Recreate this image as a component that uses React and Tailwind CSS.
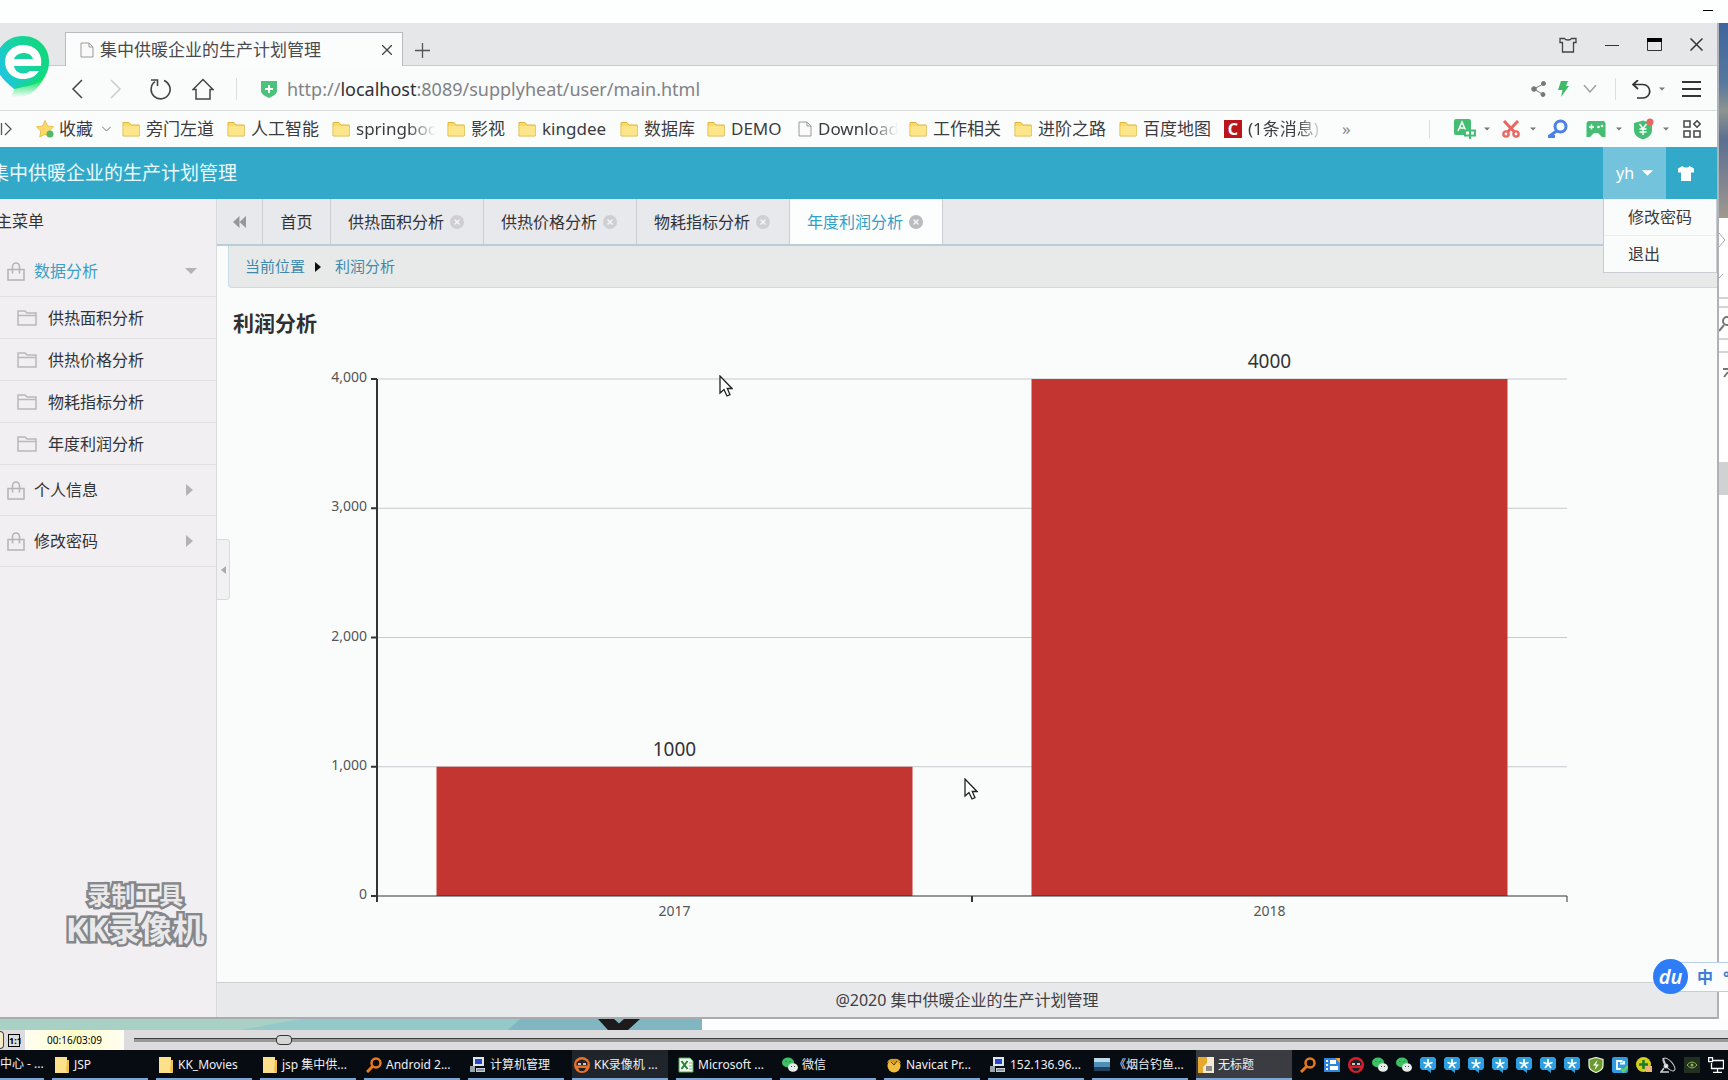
import React, { useState } from "react";

const bookmarks = [
  { label: "旁门左道", width: "w-[70px]" },
  { label: "人工智能", width: "w-[70px]" },
  { label: "springboot", width: "w-20", faded: true },
  { label: "影视", width: "w-9" },
  { label: "kingdee", width: "w-[67px]" },
  { label: "数据库", width: "w-[52px]" },
  { label: "DEMO", width: "w-14" },
  { label: "Download", width: "w-20", icon: "page", faded: true },
  { label: "工作相关", width: "w-[70px]" },
  { label: "进阶之路", width: "w-[70px]" },
  { label: "百度地图", width: "w-[70px]" },
  { label: "(1条消息)", width: "w-[76px]", icon: "c", faded: true },
];

const tabs = ["供热面积分析", "供热价格分析", "物耗指标分析", "年度利润分析"];

const profits = [
  { year: "2017", value: 1000 },
  { year: "2018", value: 4000 },
];

const tasks = [
  { label: "JSP", icon: "folder" },
  { label: "KK_Movies", icon: "folder" },
  { label: "jsp 集中供...", icon: "folder" },
  { label: "Android 2...", icon: "search" },
  { label: "计算机管理", icon: "computer" },
  { label: "KK录像机 ...", icon: "kk", tone: "bg-[#20242b]" },
  { label: "Microsoft ...", icon: "excel" },
  { label: "微信", icon: "wechat" },
  { label: "Navicat Pr...", icon: "navicat" },
  { label: "152.136.96...", icon: "computer" },
  { label: "《烟台钓鱼...", icon: "photo" },
  { label: "无标题", icon: "untitled", tone: "bg-[#3a3c42]" },
];

const tray = [
  "search", "panel", "kk2", "wechat", "wechat", "star", "star", "star", "star",
  "star", "star", "star", "shield", "clip", "plus", "dish", "nvidia", "network",
];

/* ---------- icons ---------- */

const FolderIcon = () => (
  <svg viewBox="0 0 18 16" className="h-4 w-[18px] shrink-0">
    <path d="M1 1.500h6l2 2.500h8.200V15H1z" fill="#fbdc63" stroke="#e0b63a" />
    <path d="M1.500 5h15.500v9.500H1.500z" fill="#fde58a" />
  </svg>
);

const PageIcon = () => (
  <svg viewBox="0 0 14 16" className="h-4 w-3.5 shrink-0" fill="#fafafa" stroke="#9a9a9a">
    <path d="M1 1h8l4 4v10H1zM9 1v4h4" />
  </svg>
);

const Caret = ({ className = "h-1 w-2 text-[#777]" }) => (
  <svg viewBox="0 0 8 4" className={`shrink-0 ${className}`}>
    <path d="M0 0h8L4 4z" fill="currentColor" />
  </svg>
);

const BagIcon = () => (
  <svg viewBox="0 0 18 19" className="h-[19px] w-[18px] shrink-0" fill="none" stroke="#b4b3b6" strokeWidth="1.500">
    <path d="M1 7.500h16v10.500H1zM5.500 11.500V4.500a3.500 3.500 0 0 1 7 0v7" />
  </svg>
);

const MenuFolderIcon = () => (
  <svg viewBox="0 0 20 16" className="h-4 w-5 shrink-0" fill="none" stroke="#b8b8bb" strokeWidth="1.500">
    <path d="M1 1h7l2 2h9V15H1zM1 5.500h18" />
  </svg>
);

const CloseDot = ({ active }) => (
  <svg viewBox="0 0 14 14" className={active ? "h-3.5 w-3.5 text-[#b9bbbf]" : "h-3.5 w-3.5 text-[#cfcfd3]"}>
    <circle cx="7" cy="7" r="7" fill="currentColor" />
    <path d="M4.500 4.500l5 5m0-5l-5 5" stroke="#f4f4f6" strokeWidth="1.500" />
  </svg>
);

const Cursor = () => (
  <svg viewBox="0 0 14 22" className="h-[22px] w-3.5" fill="#fff" stroke="#222" strokeWidth="1.300">
    <path d="M1 1v17l4-3.500L8 21l3-1.300L8.300 13.500H13z" />
  </svg>
);

const BrowserLogo = () => (
  <svg viewBox="0 0 50 64" className="h-16 w-[50px]">
    <defs>
      <linearGradient id="logo" x1="0" y1="0.700" x2="1" y2="0.300">
        <stop offset="0" stopColor="#1fc3ec" />
        <stop offset="0.450" stopColor="#18d3a4" />
        <stop offset="1" stopColor="#0fd879" />
      </linearGradient>
      <linearGradient id="tail" x1="0" y1="0" x2="0" y2="1">
        <stop offset="0.300" stopColor="#0be364" />
        <stop offset="1" stopColor="#0be364" stopOpacity="0" />
      </linearGradient>
    </defs>
    <path d="M23 1C38 1 49 12 49 27c0 11-6 20-17 23l-18 4C4 46-4 38-4 27-4 12 8 1 23 1z" fill="url(#logo)" />
    <path d="M47 37C42 48 36 56 28 60q-8 3-17 2l4-10q20-2 32-15z" fill="url(#tail)" />
    <path d="M14 31h27c2-12-5-21-18-21C12 10 5 18 5 27s7 17 18 17c7 0 12-2 16-8h-9c-6 5-15 2-16-5zM14 24c3-8 17-8 19 0z" fill="#fff" fillRule="evenodd" />
  </svg>
);

const ShirtOutline = () => (
  <svg viewBox="0 0 18 16" className="h-4 w-[18px]" fill="none" stroke="#444" strokeWidth="1.300">
    <path d="M1 1.500h4.500c1 2 6 2 7 0H17v4h-2.500V15h-11V5.500H1z" />
  </svg>
);

const TranslateIcon = () => (
  <svg viewBox="0 0 22 20" className="h-5 w-[22px]">
    <rect width="17" height="16" rx="2" fill="#45be74" />
    <path d="M4 12L8 3l4 9M5.500 9h5" stroke="#fff" strokeWidth="1.500" fill="none" />
    <path d="M11 11.500h10v5H11zM16 9v11" stroke="#45be74" strokeWidth="2" fill="#fff" />
  </svg>
);

const ScissorsIcon = () => (
  <svg viewBox="0 0 18 18" className="h-[18px] w-[18px]" fill="none" stroke="#ea6661" strokeWidth="2.400">
    <path d="M2 1l10.500 11M16 1L5.500 12" strokeWidth="3" />
    <circle cx="4" cy="14" r="2.600" />
    <circle cx="14" cy="14" r="2.600" />
  </svg>
);

const SearchBlueIcon = () => (
  <svg viewBox="0 0 20 20" className="h-5 w-5" fill="none" stroke="#4a80e8" strokeWidth="3">
    <circle cx="12.500" cy="7.500" r="5.500" />
    <path d="M8.500 12L1 17.500h6" />
  </svg>
);

const GamepadIcon = () => (
  <svg viewBox="0 0 20 18" className="h-[18px] w-5">
    <path d="M2 1h16l1.500 2v14H16l-4-4H8l-4 4H.500V3z" fill="#45be74" />
    <path d="M3 7h5M5.500 4.500v5" stroke="#fff" strokeWidth="1.500" />
    <circle cx="12.500" cy="7" r="1.300" fill="#fff" />
    <circle cx="16" cy="6" r="1.300" fill="#fff" />
  </svg>
);

const MoneyShieldIcon = () => (
  <svg viewBox="0 0 22 22" className="h-[22px] w-[22px]">
    <path d="M10 2.500L19 5v7c0 5-4 8-9 9.500C5 20 1 17 1 12V5z" fill="#45be74" />
    <path d="M6.500 6L10 10.500 13.500 6M10 10.500V17M6.500 11h7M6.500 14h7" stroke="#fff" strokeWidth="1.400" fill="none" />
    <circle cx="17" cy="4" r="3.500" fill="#ea6661" />
  </svg>
);

const GridIcon = () => (
  <svg viewBox="0 0 18 18" className="h-[18px] w-[18px]" fill="none" stroke="#444" strokeWidth="1.500">
    <path d="M1 1h6v6H1zM1 11h6v6H1zM11 11h6v6h-6zM14 .800l3.200 3.200L14 7.200 10.800 4z" />
  </svg>
);

function SmallIcon({ name }) {
  const cls = "h-4 w-4 shrink-0";
  switch (name) {
    case "folder":
      return (
        <svg viewBox="0 0 16 16" className={cls}>
          <path d="M1 0h12v14l2 2H1z" fill="#fde08a" />
          <path d="M13 3h2v13l-3-2z" fill="#edc04f" />
        </svg>
      );
    case "search":
      return (
        <svg viewBox="0 0 16 16" className={cls} fill="none" stroke="#e8791c" strokeWidth="2.500">
          <circle cx="10" cy="6" r="4.500" />
          <path d="M6.500 9.500L1 15" strokeWidth="3" />
        </svg>
      );
    case "computer":
      return (
        <svg viewBox="0 0 16 16" className={cls}>
          <path d="M3 0h11v9H3z" fill="#dfe5ee" />
          <path d="M5 2h7v5H5z" fill="#2a46c8" />
          <path d="M0 9h5v6H0z" fill="#9aa3ad" />
          <path d="M6 11h9v4H6z" fill="#c5ccd4" />
          <path d="M7 13h7" stroke="#4d5a66" />
        </svg>
      );
    case "kk":
    case "kk2":
      return (
        <svg viewBox="0 0 16 16" className={cls}>
          <circle cx="8" cy="8" r="8" fill={name === "kk" ? "#e9702a" : "#d81e2c"} />
          <path d="M2.500 5.500q5.500-6 11 0v3h-11z" fill="#222" />
          <path d="M4 7h3M9 7h3" stroke="#fff" strokeWidth="1.500" />
          <path d="M4 11h8l-2 3H6z" fill="#222" />
        </svg>
      );
    case "excel":
      return (
        <svg viewBox="0 0 16 16" className={cls}>
          <path d="M1 1h11l3 3v11H1z" fill="#f1f8ef" stroke="#57a65a" />
          <path d="M3.500 4l6 8m0-8l-6 8" stroke="#2b8038" strokeWidth="2" />
          <path d="M11 6h3M11 9h3M11 12h3" stroke="#7cc07c" />
        </svg>
      );
    case "wechat":
      return (
        <svg viewBox="0 0 16 16" className={cls}>
          <ellipse cx="6" cy="5.500" rx="6" ry="5" fill="#3fc067" />
          <ellipse cx="11" cy="10.500" rx="5" ry="4.300" fill="#e8ecea" />
          <path d="M3.500 4.500h1M7.500 4.500h1M9 9.500h1M12 9.500h1" stroke="#33503c" />
        </svg>
      );
    case "navicat":
      return (
        <svg viewBox="0 0 16 16" className={cls}>
          <circle cx="8" cy="9" r="6.500" fill="#efbd3c" />
          <path d="M1 6Q3 1 8 2q5-1 7 4l-4-1-3 2-3-2z" fill="#d99a22" />
          <path d="M5 5l3 3 3-4" stroke="#543a0c" fill="none" />
        </svg>
      );
    case "photo":
      return (
        <svg viewBox="0 0 16 16" className={cls}>
          <path d="M0 1h16v13H0z" fill="#4d8fb8" />
          <path d="M0 1h16v4H0z" fill="#bcd9e8" />
          <path d="M0 10h16v4H0z" fill="#21415d" />
        </svg>
      );
    case "untitled":
      return (
        <svg viewBox="0 0 16 16" className={cls}>
          <path d="M0 0h16v16H0z" fill="#f3ead4" />
          <path d="M0 0h9v6L5 10v6H0z" fill="#e6a92d" />
          <path d="M8 9h6v5H8z" fill="#8b8b88" />
        </svg>
      );
    case "panel":
      return (
        <svg viewBox="0 0 16 16" className={cls}>
          <path d="M0 1h16v14H0z" fill="#2f86dd" />
          <path d="M6 3h6v4H6zM6 9h8v4H6zM2 3h2v2H2zM2 7h2v2H2zM2 11h2v2H2z" fill="#fff" />
          <path d="M11 1h5v5z" fill="#f2a531" />
        </svg>
      );
    case "star":
      return (
        <svg viewBox="0 0 16 16" className={cls}>
          <path d="M2 0h12l2 2v9l-2 2h-3v3l-4-3H2l-2-2V2z" fill="#2d9fe0" />
          <path d="M8 2v5l4.500-1.500M8 7l3 4M8 7l-3 4M8 7L3.500 5.500" stroke="#fff" strokeWidth="1.800" fill="none" />
        </svg>
      );
    case "shield":
      return (
        <svg viewBox="0 0 16 16" className={cls}>
          <path d="M8 .500l7 2v6c0 4-4 6-7 7-3-1-7-3-7-7v-6z" fill="#6b9b2f" stroke="#e6ecd5" strokeWidth="1.300" />
          <path d="M9.500 3L5 8.500h3L6.500 13 11 7.500H8z" fill="#fff" />
        </svg>
      );
    case "clip":
      return (
        <svg viewBox="0 0 16 16" className={cls}>
          <rect width="16" height="16" rx="2" fill="#2f9be0" />
          <path d="M10.500 4H5v8h4M8 6.500h4V4" stroke="#fff" strokeWidth="1.800" fill="none" />
          <path d="M9 11.500l2.500 3L16 9" stroke="#5ed457" strokeWidth="2.500" fill="none" />
        </svg>
      );
    case "plus":
      return (
        <svg viewBox="0 0 16 16" className={cls}>
          <circle cx="7.500" cy="7.500" r="7.500" fill="#d3cf1c" />
          <path d="M7.500 3v9M3 7.500h9" stroke="#1b7a2c" strokeWidth="2.500" />
          <path d="M10 9h6v6h-6z" fill="#efb277" />
        </svg>
      );
    case "dish":
      return (
        <svg viewBox="0 0 16 16" className={cls} fill="none" stroke="#cfcfcf">
          <ellipse cx="9" cy="7.500" rx="3.500" ry="8" transform="rotate(-42 9 7.500)" />
          <circle cx="6" cy="9" r="2" fill="#fff" />
          <path d="M4 11l-3 4h8M3 1l3 8" strokeWidth="1.500" />
        </svg>
      );
    case "nvidia":
      return (
        <svg viewBox="0 0 16 16" className={cls}>
          <path d="M0 0h16v16H0z" fill="#22301f" />
          <path d="M3 8q5-6 10 0-5 6-10 0z" fill="none" stroke="#8fb552" />
          <circle cx="8" cy="8" r="1.500" fill="#8fb552" />
        </svg>
      );
    default:
      return (
        <svg viewBox="0 0 16 16" className={cls} fill="none" stroke="#fff" strokeWidth="1.300">
          <path d="M5 3.500h10.500v8H3.500V6M9.500 11.500V15M5 15.300h9M.700.700h3.800v4H.700z" />
        </svg>
      );
  }
}

/* ---------- browser chrome ---------- */

function TitleBar() {
  return (
    <div className="flex h-[43px] items-end justify-between bg-[#e6e7e9] shadow-[inset_0_-1px_0_#c9cbcd]">
      <div className="flex items-end pl-[65px]">
        <div className="flex h-[34px] w-[338px] items-center border border-b-0 border-[#b9bbbe] bg-[#fbfcfc] px-3.5 text-[17px] text-[#4a4a4e]">
          <PageIcon />
          <span className="ml-1.5 flex-1 whitespace-nowrap">集中供暖企业的生产计划管理</span>
          <button aria-label="关闭标签页" className="mr-[-4px]">
            <svg viewBox="0 0 10 10" className="h-2.5 w-2.5" stroke="#444" strokeWidth="1.300">
              <path d="M0 0l10 10M10 0L0 10" />
            </svg>
          </button>
        </div>
        <button aria-label="新建标签页" className="mb-2 ml-3">
          <svg viewBox="0 0 15 15" className="h-[15px] w-[15px]" stroke="#555" strokeWidth="1.300">
            <path d="M7.500 0v15M0 7.500h15" />
          </svg>
        </button>
      </div>
      <div className="flex h-full items-center gap-7 pr-3.5 text-[#333]">
        <button aria-label="皮肤"><ShirtOutline /></button>
        <button aria-label="最小化">
          <svg viewBox="0 0 14 14" className="h-3.5 w-3.5" stroke="currentColor"><path d="M0 7.500h14" /></svg>
        </button>
        <button aria-label="最大化">
          <svg viewBox="0 0 15 13" className="h-[13px] w-[15px]" fill="none" stroke="currentColor">
            <path d="M.500 1v11.500h14V1" />
            <path d="M0 2h15" stroke="#000" strokeWidth="4" />
          </svg>
        </button>
        <button aria-label="关闭">
          <svg viewBox="0 0 13 13" className="h-[13px] w-[13px]" stroke="currentColor" strokeWidth="1.500">
            <path d="M.500.500l12 12M12.500.500l-12 12" />
          </svg>
        </button>
      </div>
    </div>
  );
}

function AddressBar() {
  return (
    <div className="flex h-[45px] items-center border-b border-[#d9dadb] bg-[#fafbfb] pt-0.5 pr-4 pl-[71px]">
      <div className="flex items-center gap-[27px]">
        <button aria-label="后退">
          <svg viewBox="0 0 12 20" className="h-5 w-3" fill="none" stroke="#444" strokeWidth="1.500"><path d="M11 1L2 10l9 9" /></svg>
        </button>
        <button aria-label="前进">
          <svg viewBox="0 0 12 20" className="h-5 w-3" fill="none" stroke="#ccc" strokeWidth="1.500"><path d="M1 1l9 9-9 9" /></svg>
        </button>
        <button aria-label="刷新">
          <svg viewBox="0 0 22 22" className="h-[22px] w-[22px]" fill="none" stroke="#444" strokeWidth="1.600">
            <path d="M15 2.500a9.500 9.500 0 1 1-9 1.200M2 2h6.500v6" />
          </svg>
        </button>
        <button aria-label="主页" className="-ml-1.5">
          <svg viewBox="0 0 22 22" className="h-[22px] w-[22px]" fill="none" stroke="#444" strokeWidth="1.500">
            <path d="M1 11.500L11 1.500l10 10H18V21H4v-9.500z" />
          </svg>
        </button>
      </div>
      <span className="ml-[22px] h-[22px] w-px bg-[#ddd]" />
      <svg viewBox="0 0 16 18" className="ml-6 h-[18px] w-4">
        <path d="M0 1h16v10c0 3-4 5-8 7-4-2-8-4-8-7z" fill="#4bc37a" />
        <path d="M8 5v8M4 9h8" stroke="#fff" strokeWidth="2" />
      </svg>
      <p className="ml-2.5 flex-1 text-lg text-[#808286]">
        http://<span className="text-[#2f3033]">localhost</span>:8089/supplyheat/user/main.html
      </p>
      <div className="flex items-center">
        <button aria-label="分享">
          <svg viewBox="0 0 15 16" className="h-4 w-[15px]" fill="#777" stroke="#777">
            <path d="M13 2.500L3 8l9 5.500" fill="none" />
            <circle cx="12.500" cy="2.500" r="2" /><circle cx="3" cy="8" r="2.300" /><circle cx="12" cy="13.500" r="2" />
          </svg>
        </button>
        <svg viewBox="0 0 11 16" className="ml-3 h-4 w-[11px]"><path d="M3 0h7L8 5h3L3 16l1.500-7H0z" fill="#3dbb67" /></svg>
        <svg viewBox="0 0 14 8" className="ml-3.5 h-2 w-3.5" fill="none" stroke="#999" strokeWidth="1.300"><path d="M1 0l6 7 6-7" /></svg>
        <span className="ml-[18px] h-[22px] w-px bg-[#ddd]" />
        <button aria-label="撤销" className="ml-4 flex items-center gap-2">
          <svg viewBox="0 0 19 19" className="h-[19px] w-[19px]" fill="none" stroke="#333" strokeWidth="1.700">
            <path d="M6 0L1 4.500 6 9M1 4.500h10a6.500 6.500 0 0 1 0 13.500H5" />
          </svg>
          <Caret className="h-1 w-1.5 text-[#777]" />
        </button>
        <button aria-label="菜单" className="ml-[17px]">
          <svg viewBox="0 0 19 18" className="h-[18px] w-[19px]" stroke="#333" strokeWidth="2"><path d="M0 2h19M0 9h19M0 16h19" /></svg>
        </button>
      </div>
    </div>
  );
}

function BookmarkBar() {
  return (
    <div className="flex h-9 items-center overflow-hidden whitespace-nowrap bg-[#fbfcfc] pr-4 text-[17px] text-[#3c3c40]">
      <svg viewBox="0 0 12 14" className="h-3.5 w-3" fill="none" stroke="#555" strokeWidth="1.300"><path d="M1.500 1v12M5 1l6 6-6 6" /></svg>
      <button className="ml-6 flex items-center gap-[5px]">
        <svg viewBox="0 0 18 18" className="h-[18px] w-[18px]">
          <path d="M9 .500l2.600 5.500 6 .800-4.400 4.200 1 6L9 14.200 3.800 17l1-6L.500 6.800l6-.800z" fill="#fbd96a" stroke="#e9c04a" />
          <circle cx="14" cy="14" r="3.500" fill="#57b866" />
        </svg>
        收藏
        <svg viewBox="0 0 9 6" className="ml-1 h-1.5 w-[9px]" fill="none" stroke="#777"><path d="M0 .500L4.500 5 9 .500" /></svg>
      </button>
      <ul className="ml-[11px] flex items-center gap-[11px]">
        {bookmarks.map((b) => (
          <li key={b.label}>
            <a href="#" className="flex items-center gap-1.5">
              {b.icon === "page" ? (
                <PageIcon />
              ) : b.icon === "c" ? (
                <span className="flex h-[18px] w-[18px] items-center justify-center bg-[#b9151b] text-base leading-none font-bold text-white">C</span>
              ) : (
                <FolderIcon />
              )}
              <span
                className={
                  b.faded
                    ? `${b.width} overflow-hidden [mask-image:linear-gradient(to_right,black_65%,transparent)]`
                    : b.width
                }
              >
                {b.label}
              </span>
            </a>
          </li>
        ))}
      </ul>
      <span className="ml-[18px] flex-1 text-[#888]">»</span>
      <div className="flex items-center">
        <span className="mr-6 h-[18px] w-px bg-[#ddd]" />
        <button aria-label="翻译" className="flex w-12 items-center gap-2"><TranslateIcon /><Caret className="h-1 w-1.5 text-[#777]" /></button>
        <button aria-label="截图" className="flex w-[46px] items-center gap-2.5"><ScissorsIcon /><Caret className="h-1 w-1.5 text-[#777]" /></button>
        <button aria-label="搜索" className="w-[38px]"><SearchBlueIcon /></button>
        <button aria-label="游戏" className="flex w-[47px] items-center gap-2.5"><GamepadIcon /><Caret className="h-1 w-1.5 text-[#777]" /></button>
        <button aria-label="购物" className="flex w-[50px] items-center gap-2"><MoneyShieldIcon /><Caret className="h-1 w-1.5 text-[#777]" /></button>
        <button aria-label="扩展"><GridIcon /></button>
      </div>
    </div>
  );
}

/* ---------- application ---------- */

function AppHeader() {
  const [open, setOpen] = useState(true);
  return (
    <header className="flex h-[52px] items-center justify-between bg-[#33a9ca] text-white">
      <h1 className="-ml-2.5 text-[19px] whitespace-nowrap text-[#e9fbff]">集中供暖企业的生产计划管理</h1>
      <div className="flex h-full items-center">
        <div className="relative h-full">
          <button
            onClick={() => setOpen(!open)}
            className="flex h-full w-[63px] items-center justify-center gap-2 bg-[#72c3db] text-base"
          >
            yh
            <Caret className="h-1.5 w-[11px] text-white" />
          </button>
          {open && (
            <ul className="absolute top-full left-0 z-10 w-[114px] border border-t-0 border-[#c9cdd2] bg-[#fafbfb] text-base text-[#3c3c3e]">
              <li className="border-b border-[#ececee]">
                <a href="#" className="block py-1 pl-6 leading-7">修改密码</a>
              </li>
              <li>
                <a href="#" className="block py-1 pl-6 leading-7">退出</a>
              </li>
            </ul>
          )}
        </div>
        <button aria-label="主题" className="flex w-[51px] items-center pl-3">
          <svg viewBox="0 0 16 15" className="h-[15px] w-4"><path d="M4.500 0C5.500 2 10.500 2 11.500 0L16 2.500v4h-3V15H3V6.500H0v-4z" fill="#fff" /></svg>
        </button>
      </div>
    </header>
  );
}

function Sidebar() {
  const closed = ["个人信息", "修改密码"];
  return (
    <nav className="w-[217px] shrink-0 border-r border-[#d9d9dd] bg-[#f1eff2] text-base text-[#333336]">
      <h2 className="-ml-1 h-[45px] leading-[44px]">主菜单</h2>
      <button className="flex h-[53px] w-full items-center border-b border-[#e0dfe3] pt-0.5 pl-[7px] text-[#3a9fc6]">
        <BagIcon />
        <span className="ml-[9px] flex-1 text-left">数据分析</span>
        <Caret className="mr-[19px] h-1.5 w-3 text-[#b3b2b5]" />
      </button>
      <ul>
        {tabs.map((t) => (
          <li key={t} className="border-b border-[#e0dfe3]">
            <a href="#" className="flex h-[41px] items-center gap-[11px] pl-[17px]">
              <MenuFolderIcon />
              {t}
            </a>
          </li>
        ))}
      </ul>
      {closed.map((t) => (
        <button key={t} className="flex h-[51px] w-full items-center border-b border-[#e0dfe3] pl-[7px]">
          <BagIcon />
          <span className="ml-[9px] flex-1 text-left">{t}</span>
          <svg viewBox="0 0 7 12" className="mr-[23px] h-3 w-[7px]"><path d="M0 0v12l7-6z" fill="#b3b2b5" /></svg>
        </button>
      ))}
    </nav>
  );
}

function TabStrip() {
  return (
    <div className="flex h-[47px] border-b-2 border-[#b9cdd4] bg-[#e8e9ed] text-base text-[#333336]">
      <button aria-label="向左" className="flex w-[46px] items-center justify-center border-r border-[#cbcdd2]">
        <svg viewBox="0 0 13 12" className="h-3 w-[13px]"><path d="M6.500 0v12L0 6zM13 0v12L6.500 6z" fill="#98989c" /></svg>
      </button>
      <button className="w-[68px] border-r border-[#cbcdd2]">首页</button>
      {tabs.map((t, i) => {
        const active = i === tabs.length - 1;
        return (
          <button
            key={t}
            className={
              active
                ? "flex w-[153px] items-center gap-1.5 border-r border-[#cbcdd2] bg-[#fcfdfd] pl-[17px] text-[#33a0c6]"
                : "flex w-[153px] items-center gap-1.5 border-r border-[#cbcdd2] pl-[17px]"
            }
          >
            {t}
            <CloseDot active={active} />
          </button>
        );
      })}
    </div>
  );
}

// Plot area is 4000 units tall; x positions are percentages so it follows the panel width
function ProfitChart() {
  const height = 517;
  const y = (v) => height - (v / 4000) * height;
  return (
    <div className="pt-[41px] pr-[150px] pb-14 pl-[160px]">
      <svg width="100%" height={height} className="block overflow-visible" role="img" aria-label="利润分析">
        {[0, 1000, 2000, 3000, 4000].map((v) => (
          <g key={v}>
            {v > 0 && <line x1="0" x2="100%" y1={y(v)} y2={y(v)} stroke="#c6c9cd" />}
            <line x1="-6" x2="0" y1={y(v)} y2={y(v)} stroke="#333" strokeWidth="2" />
            <text x="-10" y={y(v) + 3} textAnchor="end" fontSize="14" fill="#555">
              {v.toLocaleString("en-US")}
            </text>
          </g>
        ))}
        {profits.map((p, i) => (
          <g key={p.year}>
            <rect x={`${i * 50 + 5}%`} y={y(p.value)} width="40%" height={height - y(p.value)} fill="#c23531" />
            <text x={`${i * 50 + 25}%`} y={y(p.value) - 11} textAnchor="middle" fontSize="19" fill="#333">
              {p.value}
            </text>
            <text x={`${i * 50 + 25}%`} y={height + 20} textAnchor="middle" fontSize="14" fill="#555">
              {p.year}
            </text>
          </g>
        ))}
        <line x1="0" x2="100%" y1={height} y2={height} stroke="#333" strokeWidth="1" />
        <line x1="0" x2="0" y1="0" y2={height + 6} stroke="#333" strokeWidth="2" />
        <line x1="50%" x2="50%" y1={height} y2={height + 6} stroke="#333" strokeWidth="2" />
        <line x1="100%" x2="100%" y1={height} y2={height + 6} stroke="#333" strokeWidth="1" />
      </svg>
    </div>
  );
}

function Content() {
  return (
    <main className="relative flex flex-1 flex-col bg-[#fafcfc]">
      <TabStrip />
      <nav className="ml-[11px] flex h-[42px] items-center rounded-bl border-b border-l border-[#c5dde5] bg-[#e8eae9] pl-4 text-[15px] text-[#4089ad]">
        <a href="#">当前位置</a>
        <svg viewBox="0 0 6 10" className="mr-3.5 ml-2.5 h-2.5 w-1.5"><path d="M0 0v10l6-5z" fill="#111" /></svg>
        <a href="#">利润分析</a>
      </nav>
      <h2 className="mt-5 pl-4 text-[21px] leading-[30px] font-bold text-[#303033]">利润分析</h2>
      <ProfitChart />
      <footer className="mt-auto flex h-[35px] items-center justify-center border-t border-[#cfd0d2] bg-[#e8e9ea] text-base text-[#3f4044]">
        @2020 集中供暖企业的生产计划管理
      </footer>
      <button
        aria-label="收起菜单"
        className="absolute top-[340px] left-0 flex h-[61px] w-[13px] items-center justify-center rounded-r border border-l-0 border-[#d9dadd] bg-[#f1f1f3]"
      >
        <svg viewBox="0 0 5 8" className="h-2 w-[5px]"><path d="M5 0v8L0 4z" fill="#aaa" /></svg>
      </button>
      <div className="pointer-events-none absolute top-44 left-[502px]"><Cursor /></div>
      <div className="pointer-events-none absolute top-[579px] left-[747px]"><Cursor /></div>
    </main>
  );
}

function DesktopEdge() {
  return (
    <div className="flex w-[11px] shrink-0 flex-col overflow-hidden border-l-2 border-[#aeb3b8] bg-white">
      <div className="h-[195px] bg-[linear-gradient(#3f659c,#56779f_30%,#8e938f_45%,#5a6f92_60%,#a1988e)]" />
      <svg viewBox="0 0 9 300" className="h-[300px] w-[9px]" fill="none" stroke="#777">
        <path d="M0 15l6 7-6 7M0 60l4-4M0 80h9M0 89h9M0 121h9M0 134h9" stroke="#aaa" />
        <circle cx="8" cy="103" r="4" strokeWidth="2" />
        <path d="M5 107l-5 6M4 151h6M5 159l4-5" strokeWidth="2" />
        <path d="M0 244h9v33H0z" fill="#cfd1d2" stroke="none" />
      </svg>
    </div>
  );
}

/* ---------- recorder bar and taskbar ---------- */

function PlayerBar() {
  return (
    <div className="flex h-5 items-center bg-[#dcdbdd]">
      <span className="h-[18px] w-1 rounded-r border border-l-0 border-[#444] bg-[#f5edc9]" />
      <button className="ml-1 h-[13px] w-3 border border-black text-[9px] leading-[11px] font-bold">1:1</button>
      <span className="ml-[5px] h-5 w-[99px] bg-linear-to-r from-[#fffef2] via-[#fdfcc8] to-[#fffef2] text-center text-[10px] leading-5 text-black">
        00:16/03:09
      </span>
      <input
        type="range"
        aria-label="播放进度"
        defaultValue="9"
        className="ml-2.5 h-3 flex-1 appearance-none bg-[linear-gradient(#3e3e3e_1px,#979797_1px)] bg-[length:100%_4px] bg-center bg-no-repeat [&::-webkit-slider-thumb]:h-2.5 [&::-webkit-slider-thumb]:w-4 [&::-webkit-slider-thumb]:appearance-none [&::-webkit-slider-thumb]:rounded [&::-webkit-slider-thumb]:border [&::-webkit-slider-thumb]:border-[#333] [&::-webkit-slider-thumb]:bg-[#d6d6d6]"
      />
    </div>
  );
}

function Taskbar() {
  return (
    <div className="flex h-[30px] overflow-hidden bg-[#070b12] text-xs text-[#eef0f2]">
      <div className="flex flex-1 gap-2">
        <button className="flex w-11 items-center overflow-hidden border-b-2 border-[#7aa7d6] whitespace-nowrap">中心 - ...</button>
        {tasks.map((t) => (
          <button
            key={t.label}
            className={`flex w-24 items-center gap-1 overflow-hidden border-b-2 border-[#7aa7d6] pt-0.5 pl-0.5 whitespace-nowrap ${t.tone || ""}`}
          >
            <SmallIcon name={t.icon} />
            {t.label}
          </button>
        ))}
      </div>
      <div className="flex items-center gap-2 pr-1">
        {tray.map((name, i) => (
          <SmallIcon key={i} name={name} />
        ))}
      </div>
    </div>
  );
}

export default function App() {
  return (
    <div className="relative flex min-h-screen flex-col overflow-hidden bg-[#fdfefe] font-['Noto_Sans','Noto_Sans_CJK_SC',sans-serif]">
      <div className="flex h-[23px] justify-end pr-[15px]">
        <button aria-label="最小化窗口" className="mt-[10px] h-px w-2.5 bg-black" />
      </div>

      <div className="flex flex-1">
        <div className="relative flex min-w-0 flex-1 flex-col border-b-2 border-[#a9acae]">
          <TitleBar />
          <AddressBar />
          <BookmarkBar />
          <AppHeader />
          <div className="flex flex-1">
            <Sidebar />
            <Content />
          </div>
          <div className="absolute top-3 left-0"><BrowserLogo /></div>
          {/* recorder watermark */}
          <div className="pointer-events-none absolute bottom-[70px] left-[66px] text-center font-bold text-[#e9e9eb] [paint-order:stroke_fill] [-webkit-text-stroke:5px_#85878a]">
            <p className="text-2xl leading-8">录制工具</p>
            <p className="text-[32px] leading-9">KK录像机</p>
          </div>
        </div>
        <DesktopEdge />
      </div>

      <div className="flex h-[11px]">
        <svg viewBox="0 0 702 12" preserveAspectRatio="none" className="h-full w-[702px]">
          <path d="M0 0h702v12H0z" fill="#94c8c9" />
          <path d="M0 0h300l-60 12H0z" fill="#a9d0c5" />
          <path d="M520 0h182v12H508z" fill="#80b6c2" />
          <path d="M598 0h42l-12 12h-20z" fill="#1c1a1a" />
          <path d="M614 0h10l-5 5z" fill="#80b6c2" />
        </svg>
      </div>
      <PlayerBar />
      <Taskbar />

      {/* floating input method bar */}
      <div className="absolute right-0 bottom-[86px] flex h-[35px] items-center">
        <span className="z-10 flex h-[35px] w-[35px] items-center justify-center rounded-full bg-[#2f7df6] text-xl leading-none font-semibold text-white italic">du</span>
        <div className="-ml-3 flex h-[30px] w-[52px] items-center overflow-hidden border-y border-[#b8cff0] bg-[#fbfcfe] pl-[21px] text-base font-bold whitespace-nowrap text-[#3d7cd8]">
          中<span className="ml-2.5">°</span>
        </div>
      </div>
    </div>
  );
}
